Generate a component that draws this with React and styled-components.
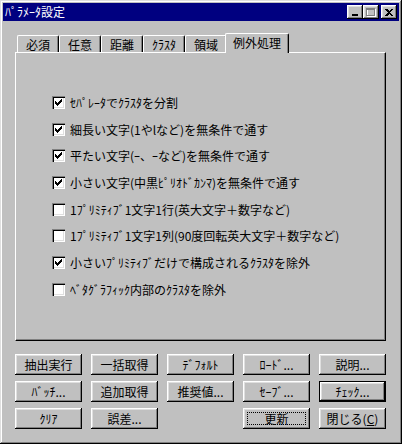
import React from "react";
import styled, { createGlobalStyle } from "styled-components";

const GlobalStyle = createGlobalStyle`
  html, body {
    margin: 0;
    padding: 0;
    background: #c0c0c0;
  }
  body {
    font-family: "Noto Sans CJK JP", "Liberation Sans", sans-serif;
    font-size: 12px;
    color: #000;
  }
`;

const raised = `
  box-shadow: inset -1px -1px #000, inset 1px 1px #fff,
    inset -2px -2px #808080, inset 2px 2px #dfdfdf;
`;

const Window = styled.div`
  width: 402px;
  height: 444px;
  box-sizing: border-box;
  padding: 3px;
  background: #c0c0c0;
  display: flex;
  flex-direction: column;
  box-shadow: inset -1px -1px #000, inset 1px 1px #dfdfdf,
    inset -2px -2px #808080, inset 2px 2px #fff;
`;

const TitleBar = styled.div`
  height: 18px;
  background: #000080;
  display: flex;
  align-items: center;
  justify-content: space-between;
  padding: 0 2px 0 2px;
`;

const TitleText = styled.span`
  color: #fff;
  font-size: 12px;
  line-height: 18px;
  letter-spacing: 0;
`;

const TitleButtons = styled.div`
  display: flex;
  align-items: center;
`;

const TitleButton = styled.div`
  width: 16px;
  height: 14px;
  background: #c0c0c0;
  margin-left: ${(p) => (p.$gap ? "2px" : "0")};
  display: flex;
  align-items: center;
  justify-content: center;
  ${raised}
`;

const Body = styled.div`
  flex: 1;
  display: flex;
  flex-direction: column;
  padding: 12px 13px 0 12px;
`;

const TabStrip = styled.div`
  display: flex;
  align-items: flex-end;
  height: 19px;
  padding-left: 2px;
  position: relative;
  z-index: 1;
`;

const Tab = styled.div`
  box-sizing: border-box;
  width: ${(p) => (p.$active ? "64px" : "42px")};
  height: ${(p) => (p.$active ? "20px" : "17px")};
  margin: ${(p) => (p.$active ? "0 -2px -1px -2px" : "0")};
  background: #c0c0c0;
  border-top: 1px solid #fff;
  border-left: 1px solid #fff;
  border-right: 1px solid #000;
  border-top-left-radius: 2px;
  border-top-right-radius: 2px;
  box-shadow: inset -1px 0 #808080;
  display: flex;
  align-items: ${(p) => (p.$active ? "flex-start" : "center")};
  justify-content: center;
  padding-top: ${(p) => (p.$active ? "1px" : "0")};
  font-size: 12px;
  line-height: 15px;
  position: relative;
  z-index: ${(p) => (p.$active ? 2 : 1)};
`;

const Panel = styled.div`
  box-sizing: border-box;
  width: 371px;
  height: 289px;
  border-top: 1px solid #fff;
  border-left: 1px solid #fff;
  border-right: 1px solid #000;
  border-bottom: 1px solid #000;
  box-shadow: inset -1px -1px #808080;
  padding: 43px 0 0 36px;
  display: flex;
  flex-direction: column;
`;

const CheckRow = styled.label`
  display: flex;
  align-items: center;
  height: 26.7px;
  margin-top: -7px;
  margin-bottom: 7px;
`;

const Box = styled.span`
  box-sizing: border-box;
  width: 13px;
  height: 13px;
  flex: none;
  background: #fff;
  box-shadow: inset 1px 1px #808080, inset 2px 2px #000,
    inset -1px -1px #fff, inset -2px -2px #dfdfdf;
  display: flex;
  align-items: center;
  justify-content: center;
  margin-right: 5px;
`;

const Label = styled.span`
  font-size: 12px;
  line-height: 13px;
  white-space: nowrap;
`;

const ButtonGrid = styled.div`
  display: grid;
  grid-template-columns: repeat(5, 67px);
  grid-auto-rows: 21px;
  column-gap: 9px;
  row-gap: 6px;
  margin-top: 13px;
`;

const Button = styled.div`
  box-sizing: border-box;
  grid-column: ${(p) => p.$col || "auto"};
  background: #c0c0c0;
  display: flex;
  align-items: center;
  justify-content: center;
  font-size: 12px;
  line-height: 14px;
  position: relative;
  ${(p) =>
    p.$default
      ? `border: 1px solid #000;
         box-shadow: inset -1px -1px #000, inset 1px 1px #fff,
           inset -2px -2px #808080, inset 2px 2px #dfdfdf;`
      : raised}
`;

const FocusRing = styled.span`
  position: absolute;
  inset: 4px;
  border: 1px dotted #000;
  pointer-events: none;
`;

const CHECK = [
  [6, 0],
  [5, 1], [6, 1],
  [0, 2], [4, 2], [5, 2], [6, 2],
  [0, 3], [1, 3], [3, 3], [4, 3], [5, 3],
  [0, 4], [1, 4], [2, 4], [3, 4], [4, 4],
  [1, 5], [2, 5], [3, 5],
  [2, 6],
];

const CheckMark = () => (
  <svg width="7" height="7" viewBox="0 0 7 7" shapeRendering="crispEdges">
    {CHECK.map(([x, y]) => (
      <rect key={`${x}-${y}`} x={x} y={y} width="1" height="1" fill="#000" />
    ))}
  </svg>
);

const Checkbox = ({ checked, children }) => (
  <CheckRow>
    <Box>{checked && <CheckMark />}</Box>
    <Label>{children}</Label>
  </CheckRow>
);

const MinGlyph = () => (
  <svg width="8" height="8" viewBox="0 0 8 8" shapeRendering="crispEdges">
    <rect x="1" y="6" width="6" height="2" fill="#000" />
  </svg>
);

const MaxGlyph = () => (
  <svg width="10" height="9" viewBox="0 0 10 9" shapeRendering="crispEdges">
    <rect x="1.5" y="1.5" width="8" height="7" fill="none" stroke="#fff" />
    <rect x="0.5" y="0.5" width="8" height="7" fill="none" stroke="#808080" />
    <rect x="0" y="1" width="9" height="1" fill="#808080" />
  </svg>
);

const CloseGlyph = () => (
  <svg width="8" height="7" viewBox="0 0 8 7" shapeRendering="crispEdges">
    <path d="M0 0h2l2 2 2-2h2L5 3.5 8 7H6L4 5 2 7H0l3-3.5z" fill="#000" />
  </svg>
);

const tabs = ["必須", "任意", "距離", "ｸﾗｽﾀ", "領域", "例外処理"];

const options = [
  ["ｾﾊﾟﾚｰﾀでｸﾗｽﾀを分割", true],
  ["細長い文字(1やlなど)を無条件で通す", true],
  ["平たい文字(ｰ、ｰなど)を無条件で通す", true],
  ["小さい文字(中黒ﾋﾟﾘｵﾄﾞｶﾝﾏ)を無条件で通す", true],
  ["1ﾌﾟﾘﾐﾃｨﾌﾞ1文字1行(英大文字＋数字など)", false],
  ["1ﾌﾟﾘﾐﾃｨﾌﾞ1文字1列(90度回転英大文字＋数字など)", false],
  ["小さいﾌﾟﾘﾐﾃｨﾌﾞだけで構成されるｸﾗｽﾀを除外", true],
  ["ﾍﾞﾀｸﾞﾗﾌｨｯｸ内部のｸﾗｽﾀを除外", false],
];

const App = () => {
  return (
    <>
      <GlobalStyle />
      <Window>
        <TitleBar>
          <TitleText>ﾊﾟﾗﾒｰﾀ設定</TitleText>
          <TitleButtons>
            <TitleButton>
              <MinGlyph />
            </TitleButton>
            <TitleButton>
              <MaxGlyph />
            </TitleButton>
            <TitleButton $gap>
              <CloseGlyph />
            </TitleButton>
          </TitleButtons>
        </TitleBar>
        <Body>
          <TabStrip>
            {tabs.map((t, i) => (
              <Tab key={t} $active={i === tabs.length - 1}>
                {t}
              </Tab>
            ))}
          </TabStrip>
          <Panel>
            {options.map(([text, checked]) => (
              <Checkbox key={text} checked={checked}>
                {text}
              </Checkbox>
            ))}
          </Panel>
          <ButtonGrid>
            <Button>抽出実行</Button>
            <Button>一括取得</Button>
            <Button>ﾃﾞﾌｫﾙﾄ</Button>
            <Button>ﾛｰﾄﾞ...</Button>
            <Button>説明...</Button>
            <Button>ﾊﾞｯﾁ...</Button>
            <Button>追加取得</Button>
            <Button>推奨値...</Button>
            <Button>ｾｰﾌﾞ...</Button>
            <Button $default>ﾁｪｯｸ...</Button>
            <Button>ｸﾘｱ</Button>
            <Button>誤差...</Button>
            <Button $col="4">
              更新
              <FocusRing />
            </Button>
            <Button>
              閉じる(<u>C</u>)
            </Button>
          </ButtonGrid>
        </Body>
      </Window>
    </>
  );
};

export default App;
